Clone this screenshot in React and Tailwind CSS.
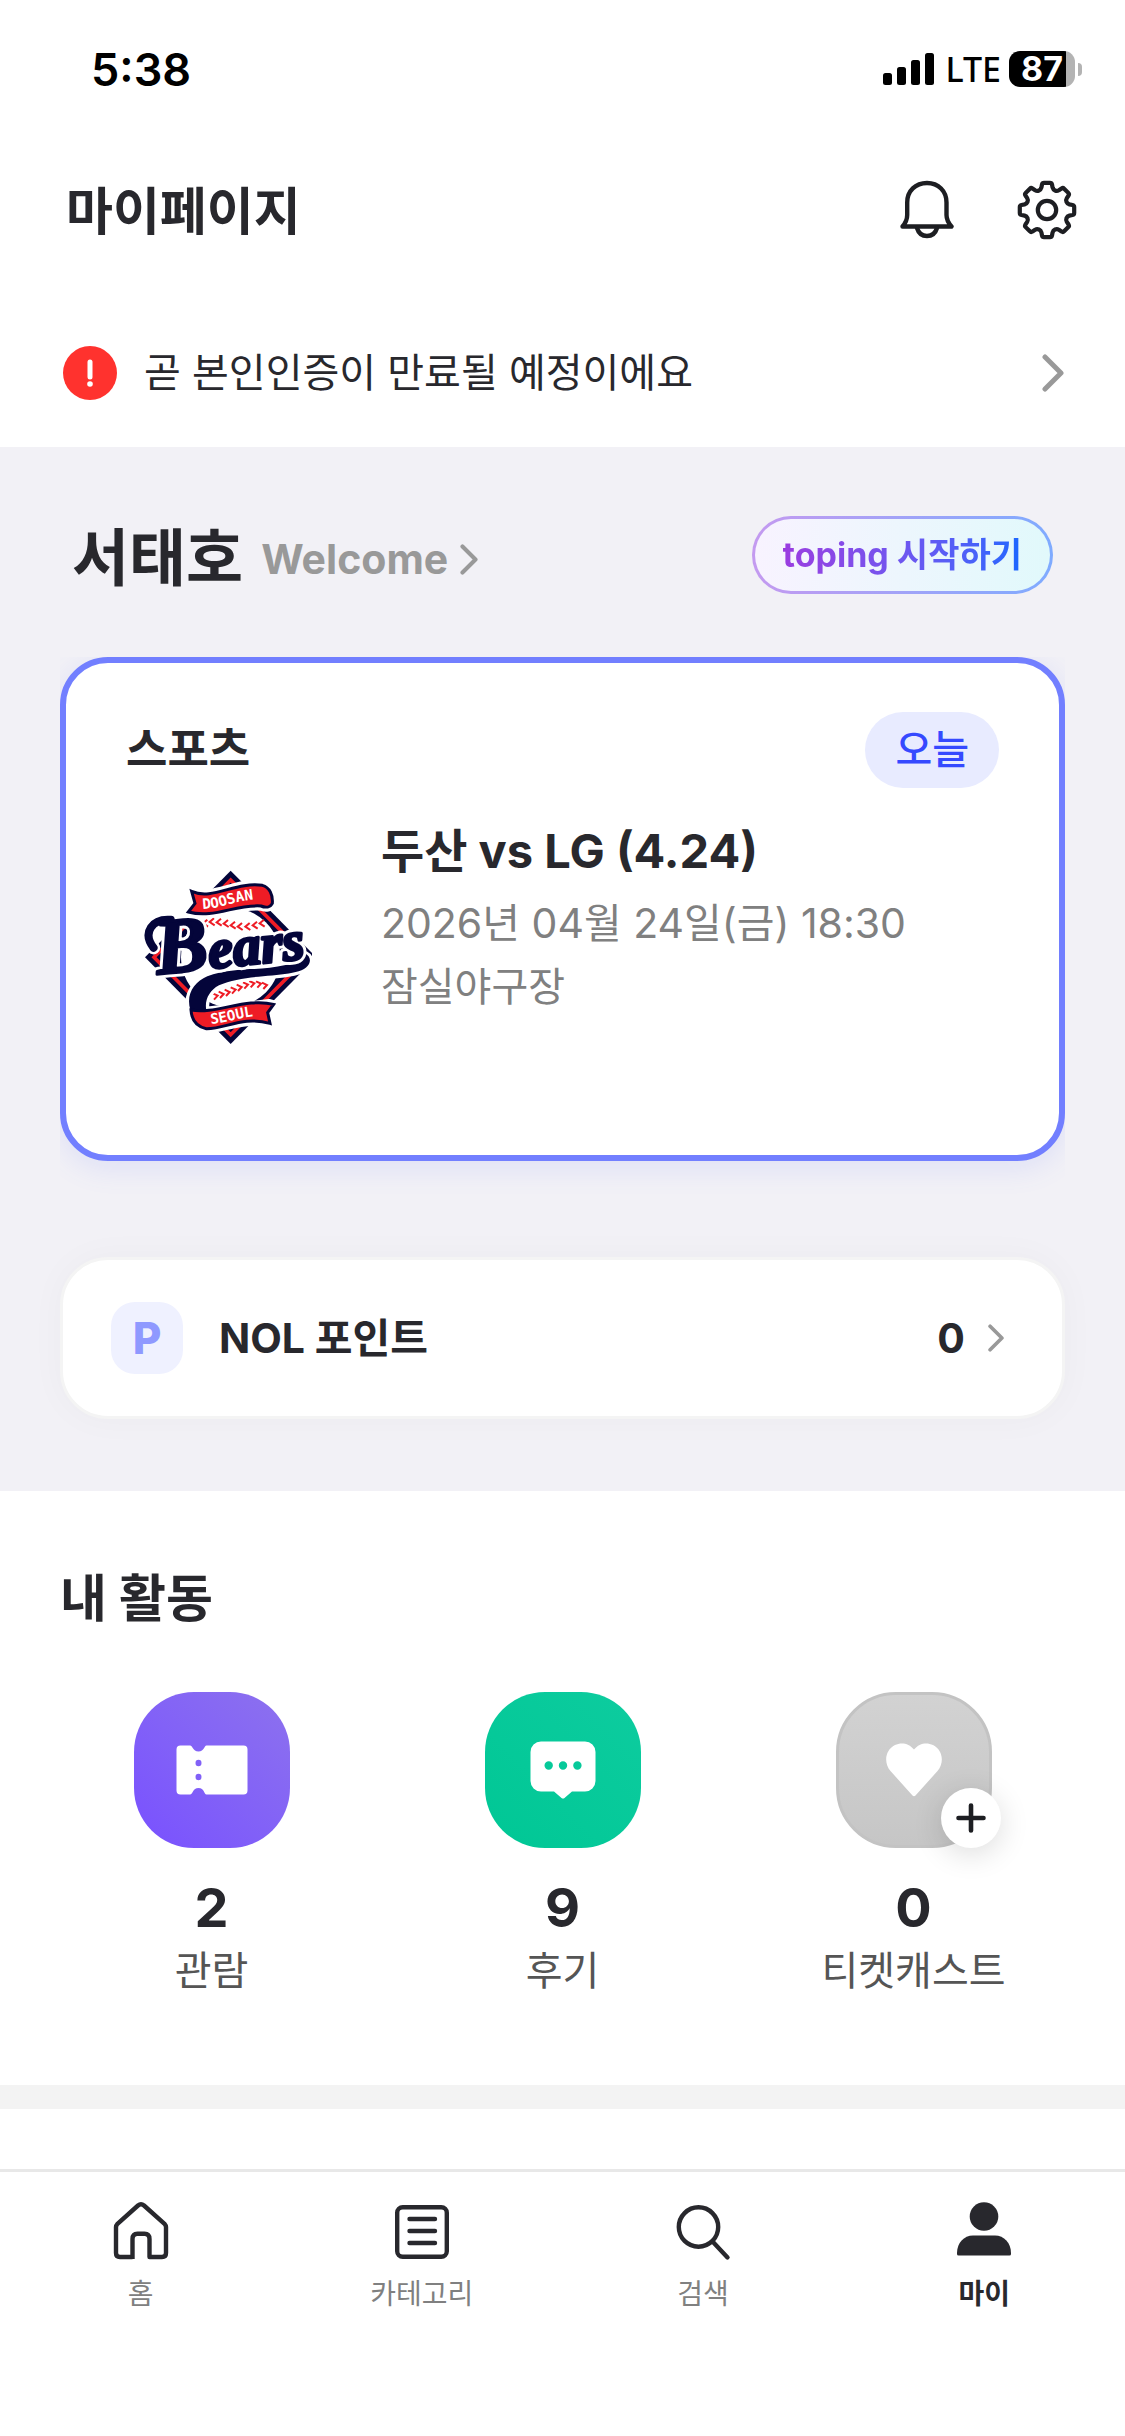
import React from "react";

const INK = "#28282d";

function Chevron({ className }) {
  return (
    <svg className={className} viewBox="0 0 22 38" fill="none" stroke="#999999" strokeWidth="5" strokeLinecap="round" strokeLinejoin="round" aria-hidden="true">
      <path d="M3 3 L19 19 L3 35" />
    </svg>
  );
}

function SignalBars() {
  return (
    <svg className="h-8 w-[51px]" viewBox="0 0 51 32" fill="#000" aria-hidden="true">
      <rect x="0" y="20" width="9" height="12" rx="2.5" />
      <rect x="14" y="14" width="9" height="18" rx="2.5" />
      <rect x="28" y="7" width="9" height="25" rx="2.5" />
      <rect x="42" y="0" width="9" height="32" rx="2.5" />
    </svg>
  );
}

function StatusBar() {
  return (
    <div className="flex h-[138px] items-center justify-between pl-[91px] pr-[43px] text-black">
      <span className="text-[45px] leading-none font-semibold">5:38</span>
      <div className="flex items-center">
        <SignalBars />
        <span className="ml-[11px] font-['Noto_Sans'] text-[34px] leading-[50px] font-medium">LTE</span>
        <div className="ml-2 flex h-9 w-[66px] items-center justify-center rounded-[11px] bg-linear-to-r from-black from-86% to-[#b3b3b3] to-86%">
          <span className="text-[34px] leading-9 font-bold text-white">87</span>
        </div>
        <div className="ml-[3px] h-[13px] w-1 rounded-r-full bg-[#b3b3b3]" />
      </div>
    </div>
  );
}

function BellIcon() {
  return (
    <svg className="h-[60px] w-[54px]" viewBox="0 0 54 60" fill="none" stroke="#1d1e22" strokeWidth="4.4" strokeLinecap="round" strokeLinejoin="round" aria-hidden="true">
      <path d="M2.5 46.5 C6 42.500 7.200 39.500 7.200 35 V22.500 C7.200 11 15.500 3 27 3 C38.500 3 46.500 11 46.500 22.500 V35 C46.500 39.500 48 42.500 51.500 46.500 Z" />
      <path d="M17 48 C18.500 53 22 56 27 56 C32 56 35.500 53 37 48" />
    </svg>
  );
}

function rotated(x, y, deg) {
  const a = (deg * Math.PI) / 180;
  const px = 30 + x * Math.cos(a) - y * Math.sin(a);
  const py = 30 + x * Math.sin(a) + y * Math.cos(a);
  return `${px.toFixed(2)} ${py.toFixed(2)}`;
}

const gearPath =
  [0, 45, 90, 135, 180, 225, 270, 315]
    .map(
      (deg, i) =>
        `${i === 0 ? "M" : "A4.200 4.200 0 0 0 "}${rotated(-5.6, -22.4, deg)} L${rotated(-5, -25.500, deg)} Q${rotated(-4.6, -27.2, deg)} ${rotated(-3, -27.2, deg)} L${rotated(3, -27.2, deg)} Q${rotated(4.6, -27.2, deg)} ${rotated(5, -25.500, deg)} L${rotated(5.6, -22.4, deg)}`
    )
    .join(" ") + ` A4.200 4.200 0 0 0 ${rotated(-5.6, -22.4, 0)} Z`;

function GearIcon() {
  return (
    <svg className="h-[60px] w-[60px]" viewBox="0 0 60 60" fill="none" stroke="#1d1e22" strokeWidth="4.2" strokeLinejoin="round" aria-hidden="true">
      <path d={gearPath} />
      <circle cx="30" cy="30" r="9.2" />
    </svg>
  );
}

const upperSeam = [[240, 225], [258, 218], [278, 214], [299, 215], [320, 219], [341, 224], [362, 228], [385, 228], [407, 224], [428, 218]];
const lowerSeam = [[290, 437], [308, 432], [326, 426], [344, 419], [362, 411], [381, 404], [400, 400], [420, 401], [438, 405]];

function BearsLogo() {
  return (
    <svg className="h-[174px] w-[168px]" viewBox="75 58 504 522" role="img" aria-label="Doosan Bears Seoul">
      <path d="M335 60 L592 320 L335 580 L78 320 Z" fill="#04053a" />
      <path d="M335 88 L565 320 L335 552 L105 320 Z" fill="none" stroke="#ee1c25" strokeWidth="11" />
      <circle cx="335" cy="320" r="149" fill="#fff" />
      <g fill="none" stroke="#ee1c25" strokeWidth="6">
        {upperSeam.map(([x, y]) => (
          <path key={x} d={`M${x + 7} ${y - 11} L${x - 6} ${y} L${x + 9} ${y + 10}`} />
        ))}
        {lowerSeam.map(([x, y]) => (
          <path key={x} d={`M${x - 9} ${y - 9} L${x + 6} ${y - 2} L${x - 5} ${y + 10}`} />
        ))}
      </g>

      <path
        d="M218 122 C280 150 350 92 430 104 C452 110 462 132 460 158 C454 170 440 172 426 166 C350 160 285 205 208 184 L228 158 Z"
        fill="#ee1c25" stroke="#fff" strokeWidth="28" strokeLinejoin="round"
      />
      <path
        d="M218 122 C280 150 350 92 430 104 C452 110 462 132 460 158 C454 170 440 172 426 166 C350 160 285 205 208 184 L228 158 Z"
        fill="#ee1c25" stroke="#04053a" strokeWidth="9" strokeLinejoin="miter"
      />
      <path id="doosan-line" d="M251 175 C310 174 350 148 418 145" fill="none" />
      <text fontFamily="'DejaVu Sans Mono', monospace" fontWeight="700" fontSize="43" fill="#fff">
        <textPath href="#doosan-line">DOOSAN</textPath>
      </text>

      <path
        d="M500 306 C555 300 580 315 568 340 C545 388 390 362 300 404 C270 420 256 450 262 478 L450 455 L468 460 L446 486 L454 520 C380 505 330 530 280 536 C225 535 195 480 214 430 C245 350 350 365 500 343 C545 337 548 328 525 326 Z"
        fill="none" stroke="#fff" strokeWidth="20" strokeLinejoin="round"
      />
      <path
        d="M500 300 C555 296 582 315 570 340 C545 388 390 362 300 404 C270 420 256 450 262 478 C245 490 225 492 214 478 C200 430 225 395 265 377 C340 348 420 362 500 343 C545 337 548 328 525 326 Z"
        fill="#04053a"
      />
      <path
        d="M216 478 C290 492 380 440 464 461 L446 486 L453 518 C370 495 320 535 262 534 C232 528 218 510 216 478 Z"
        fill="#ee1c25" stroke="#04053a" strokeWidth="9"
      />
      <path id="seoul-line" d="M276 520 C320 517 360 500 420 495" fill="none" />
      <text fontFamily="'DejaVu Sans Mono', monospace" fontWeight="700" fontSize="43" fill="#fff">
        <textPath href="#seoul-line">SEOUL</textPath>
      </text>

      <g transform="rotate(-6 120 370)" fontFamily="'Liberation Serif', serif" fontStyle="italic" fontWeight="700" strokeLinejoin="round" strokeLinecap="round">
        <path d="M112 290 C82 240 118 202 172 212" fill="none" stroke="#fff" strokeWidth="40" />
        <text x="116" y="370" fill="#fff" stroke="#fff" strokeWidth="26">
          <tspan fontSize="236">B</tspan>
          <tspan fontSize="168">ears</tspan>
        </text>
        <path d="M112 290 C82 240 118 202 172 212" fill="none" stroke="#04053a" strokeWidth="24" />
        <text x="116" y="370" fill="#04053a" stroke="#04053a" strokeWidth="9">
          <tspan fontSize="236">B</tspan>
          <tspan fontSize="168">ears</tspan>
        </text>
      </g>
    </svg>
  );
}

function TicketIcon() {
  return (
    <svg className="h-[50px] w-[72px]" viewBox="0 0 72 50" aria-hidden="true">
      <path
        fill="#fff" fillRule="evenodd"
        d="M4.500 0.500 H14 C17 0.500 16.500 6.500 22.500 6.500 C28.500 6.500 28 0.500 30.500 0.500 H67.500 A4 4 0 0 1 71.500 4.500 V45.500 A4 4 0 0 1 67.500 49.500 H30.500 C28 49.500 28.500 43 22.500 43 C16.500 43 17 49.500 14 49.500 H4.500 A4 4 0 0 1 0.500 45.500 V4.500 A4 4 0 0 1 4.500 0.500 Z
           M19.500 18 a3 3.300 0 1 0 6 0 a3 3.300 0 1 0 -6 0 Z M19.500 32 a3 3.300 0 1 0 6 0 a3 3.300 0 1 0 -6 0 Z"
      />
    </svg>
  );
}

function ReviewIcon() {
  return (
    <svg className="h-[58px] w-[66px]" viewBox="0 0 66 58" aria-hidden="true">
      <path
        fill="#fff" fillRule="evenodd"
        d="M11 0.500 H55 A10.500 10.500 0 0 1 65.500 11 V40 A10.500 10.500 0 0 1 55 50.500 H42 L34.500 57 Q33 58.200 31.500 57 L24 50.500 H11 A10.500 10.500 0 0 1 0.500 40 V11 A10.500 10.500 0 0 1 11 0.500 Z
           M14.500 24.500 a4.200 4.200 0 1 0 8.400 0 a4.200 4.200 0 1 0 -8.400 0 Z M28.800 24.500 a4.200 4.200 0 1 0 8.400 0 a4.200 4.200 0 1 0 -8.400 0 Z M43.200 24.500 a4.200 4.200 0 1 0 8.400 0 a4.200 4.200 0 1 0 -8.400 0 Z"
      />
    </svg>
  );
}

function HeartIcon() {
  return (
    <svg className="h-[54px] w-[58px]" viewBox="0 0 58 54" fill="#fff" aria-hidden="true">
      <path d="M29 6.500 C24 0 16 -1 10 2 C0 7 -1.500 20 5.500 28 L27.500 52.500 Q29 54 30.500 52.500 L52.500 28 C59.500 20 58 7 48 2 C42 -1 34 0 29 6.500 Z" />
    </svg>
  );
}

function Activity({ tile, icon, count, label, badge }) {
  return (
    <a href="#" className="flex flex-col items-center">
      <div className={`relative flex h-[156px] w-[156px] items-center justify-center rounded-[60px] ${tile}`}>
        {icon}
        {badge}
      </div>
      <span className="mt-6 text-[54px] leading-[72px] font-bold">{count}</span>
      <span className="text-[40px] leading-[54px] text-[#555555]">{label}</span>
    </a>
  );
}

function PlusBadge() {
  return (
    <span className="absolute -right-3 -bottom-[3px] flex h-[60px] w-[60px] items-center justify-center rounded-full bg-white shadow-[0_6px_30px_rgba(0,0,0,0.14)]">
      <svg className="h-[30px] w-[30px]" viewBox="0 0 30 30" stroke="#1d1e22" strokeWidth="4.6" strokeLinecap="round" aria-hidden="true">
        <path d="M15 2.500 V27.500 M2.500 15 H27.500" />
      </svg>
    </span>
  );
}

const navIconClass = "h-[66px] w-[66px]";

const navItems = [
  {
    label: "홈",
    icon: (
      <svg className={navIconClass} viewBox="0 0 66 66" fill="none" stroke={INK} strokeWidth="4.4" strokeLinejoin="round" aria-hidden="true">
        <path d="M24.500 58 H12 Q8 58 8 54 V28 Q8 26.500 9.200 25.200 L30 6.500 Q33 4 36 6.500 L56.800 25.200 Q58 26.500 58 28 V54 Q58 58 54 58 H41.500 V40 Q41.500 34.700 36.500 34.700 H29.500 Q24.500 34.700 24.500 40 V60" />
      </svg>
    ),
  },
  {
    label: "카테고리",
    icon: (
      <svg className={navIconClass} viewBox="0 0 66 66" fill="none" stroke={INK} strokeWidth="4.4" strokeLinecap="round" aria-hidden="true">
        <rect x="8.200" y="8.200" width="49.600" height="49.600" rx="5.500" />
        <path d="M20.500 20 H46 M20.500 32 H46 M20.500 44 H46" />
      </svg>
    ),
  },
  {
    label: "검색",
    icon: (
      <svg className={navIconClass} viewBox="0 0 66 66" fill="none" stroke={INK} strokeWidth="4.400" strokeLinecap="round" aria-hidden="true">
        <circle cx="28.500" cy="28" r="19.700" />
        <path d="M43 43 L57.500 58.500" />
      </svg>
    ),
  },
  {
    label: "마이",
    active: true,
    icon: (
      <svg className={navIconClass} viewBox="0 0 66 66" fill={INK} aria-hidden="true">
        <circle cx="33" cy="17.500" r="14.300" />
        <path d="M6 54 C6 44 13 36.500 22 36.500 H44 C53 36.500 60 44 60 54 V55 Q60 56.500 58.500 56.500 H7.500 Q6 56.500 6 55 Z" />
      </svg>
    ),
  },
];

export default function App() {
  return (
    <div className="flex min-h-screen flex-col bg-white font-[Inter,'Noto_Sans_CJK_KR',sans-serif] text-[#28282d]">
      <StatusBar />

      <header className="mb-4 flex h-[144px] items-center justify-between pr-12 pl-[66px]">
        <h1 className="pt-1 text-[51px] leading-[76px] font-bold">마이페이지</h1>
        <div className="flex items-center gap-[63px]">
          <button type="button" aria-label="알림"><BellIcon /></button>
          <button type="button" aria-label="설정"><GearIcon /></button>
        </div>
      </header>

      <a href="#" className="flex h-[149px] items-center pr-[61px] pl-[63px]">
        <svg className="h-[54px] w-[54px]" viewBox="0 0 54 54" aria-hidden="true">
          <circle cx="27" cy="27" r="27" fill="#ff322e" />
          <path d="M27 16 V31" stroke="#fff" strokeWidth="5" strokeLinecap="round" />
          <circle cx="27" cy="38" r="2.800" fill="#fff" />
        </svg>
        <span className="ml-[27px] flex-1 text-[40px] leading-[60px]">곧 본인인증이 만료될 예정이에요</span>
        <Chevron className="h-[38px] w-[22px]" />
      </a>

      <main className="flex flex-1 flex-col">
        <section className="bg-[#f2f1f6] pt-[63px] pb-[72px]">
          <div className="flex items-start justify-between px-[72px]">
            <a href="#" className="flex items-center pt-1">
              <span className="text-[62px] leading-[90px] font-bold">서태호</span>
              <span className="ml-[18px] text-[41px] leading-[60px] font-bold text-[#999999]">Welcome</span>
              <Chevron className="ml-3 h-[31px] w-[18px]" />
            </a>
            <button
              type="button"
              className="mt-[6px] h-[78px] cursor-pointer rounded-full border-[3px] border-transparent px-7 [background:linear-gradient(90deg,#f8f3ff,#e1f9fb)_padding-box,linear-gradient(90deg,#c49af0,#7fabff)_border-box]"
            >
              <span className="bg-linear-to-r from-[#9a3ce0] to-[#1667ff] bg-clip-text text-[34px] leading-[54px] font-bold text-transparent">
                toping 시작하기
              </span>
            </button>
          </div>

          <div className="mx-[60px] mt-[53px] overflow-hidden pb-[39px]">
            <article className="rounded-[48px] border-[6px] border-[#727fff] bg-white px-[60px] pt-[49px] pb-[111px] shadow-[0_6px_30px_rgba(90,110,255,0.14)]">
              <div className="flex items-center justify-between">
                <h2 className="text-[45px] leading-[68px] font-bold">스포츠</h2>
                <span className="rounded-full bg-[#e8ebff] px-[30px] py-2 text-[40px] leading-[60px] font-medium text-[#3549ff]">오늘</span>
              </div>
              <div className="mt-[30px] flex gap-[51px]">
                <div className="flex w-[204px] justify-center pt-[52px]">
                  <BearsLogo />
                </div>
                <div className="flex-1">
                  <h3 className="mb-2 text-[47px] leading-[66px] font-bold">두산 vs LG (4.24)</h3>
                  <p className="text-[41px] leading-[63px] text-[#808080]">2026년 04월 24일(금) 18:30</p>
                  <p className="text-[40px] leading-[63px] text-[#808080]">잠실야구장</p>
                </div>
              </div>
            </article>
          </div>

          <a href="#" className="mx-[60px] mt-[57px] flex items-center rounded-[48px] border-[3px] border-[#f4f4f4] bg-white py-[42px] pr-[57px] pl-12 shadow-[0_0_36px_rgba(0,0,0,0.03)]">
            <span className="flex h-[72px] w-[72px] items-center justify-center rounded-3xl bg-[#eff1ff] text-[44px] leading-none font-extrabold text-[#8f99ff]">P</span>
            <span className="ml-9 flex-1 text-[41px] leading-[60px] font-bold">NOL 포인트</span>
            <span className="text-[41px] leading-[60px] font-bold">0</span>
            <Chevron className="ml-[22px] h-7 w-[18px]" />
          </a>
        </section>

        <section className="pt-[70px] pb-[87px]">
          <h2 className="px-[60px] text-[51px] leading-[76px] font-bold">내 활동</h2>
          <div className="mt-[55px] grid grid-cols-3 px-9">
            <Activity tile="bg-linear-to-tr from-[#7950ff] to-[#8d71ee]" icon={<TicketIcon />} count="2" label="관람" />
            <Activity tile="bg-linear-to-tr from-[#00c795] to-[#0dcc9f]" icon={<ReviewIcon />} count="9" label="후기" />
            <Activity tile="border-[3px] border-[#c3c3c3] bg-linear-to-t from-[#c6c6c6] to-[#d2d2d2]" icon={<HeartIcon />} count="0" label="티켓캐스트" badge={<PlusBadge />} />
          </div>
        </section>
        <div className="h-6 bg-[#f3f3f3]" />
      </main>

      <nav className="grid min-h-[267px] grid-cols-4 border-t-[3px] border-[#e8e8e8] bg-white pt-[27px]">
        {navItems.map((item) => (
          <a key={item.label} href="#" className="flex flex-col items-center" aria-current={item.active ? "page" : undefined}>
            {item.icon}
            <span className={`mt-2 text-[28px] leading-[42px] ${item.active ? "font-bold" : "text-[#808080]"}`}>{item.label}</span>
          </a>
        ))}
      </nav>
    </div>
  );
}
